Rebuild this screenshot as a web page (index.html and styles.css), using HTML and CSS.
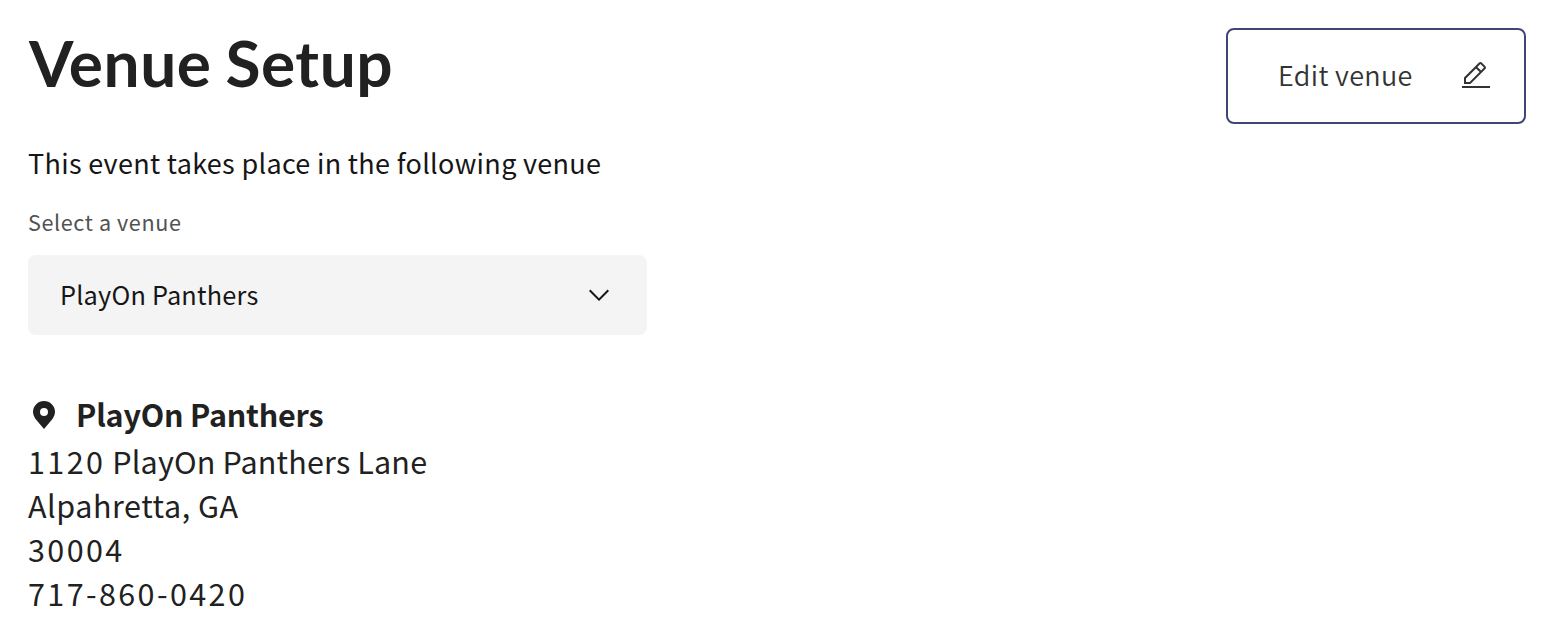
FILE: index.html
```html
<!DOCTYPE html>
<html lang="en">
<head>
<meta charset="utf-8">
<title>Venue Setup</title>
<link rel="stylesheet" href="styles.css">
</head>
<body>
<main class="page">
  <header class="header">
    <h1 class="title">Venue Setup</h1>
    <button class="edit" type="button">
      <span class="edit-label">Edit venue</span>
      <svg class="icon" viewBox="0 0 32 32"><path d="M2 26H30V28H2z"/><path d="M25.4,9c0.8-0.8,0.8-2,0-2.8l-3.6-3.6c-0.8-0.8-2-0.8-2.8,0l-15,15V24h6.4L25.4,9z M20.4,4L24,7.6l-3,3L17.4,7L20.4,4z M6,22v-3.6l10-10l3.6,3.6l-10,10H6z"/></svg>
    </button>
  </header>
  <p class="intro">This event takes place in the following venue</p>
  <div class="label">Select a venue</div>
  <div class="select" role="combobox">
    <span class="value">PlayOn Panthers</span>
    <svg class="icon" viewBox="0 0 16 16"><path d="M8 11 3 6 3.7 5.3 8 9.6 12.3 5.3 13 6z"/></svg>
  </div>
  <section class="venue">
    <div class="venue-head">
      <svg class="icon" viewBox="0 0 32 32"><path d="M16,2A11.0134,11.0134,0,0,0,5,13a10.8885,10.8885,0,0,0,2.2163,6.6s.3.3945.3482.4517L16,30l8.439-9.9526c.0444-.0533.3447-.4478.3447-.4478l.0015-.0033A10.8846,10.8846,0,0,0,27,13,11.0134,11.0134,0,0,0,16,2Zm0,15a4,4,0,1,1,4-4A4.0045,4.0045,0,0,1,16,17Z"/></svg>
      <h2 class="venue-name">PlayOn Panthers</h2>
    </div>
    <div class="line street"><span class="digits">1120</span> PlayOn Panthers Lane</div>
    <div class="line city">Alpahretta, GA</div>
    <div class="line digits">30004</div>
    <div class="line digits">717-860-0420</div>
  </section>
</main>
</body>
</html>
```
FILE: styles.css
```css
* { box-sizing: border-box; }
body {
  margin: 0;
  background: #fff;
  color: #212121;
  font-family: "Noto Sans CJK SC", "Noto Sans", sans-serif;
}
.page { padding: 27px 28px 0; }
.header { display: flex; justify-content: space-between; align-items: flex-start; height: 116px; }
.title {
  margin: 0;
  padding-left: 1px;
  font: 700 64px/72px Lato, sans-serif;
  letter-spacing: 0.5px;
  word-spacing: -2px;
  white-space: nowrap;
}
.icon { display: block; width: 32px; height: 32px; flex: none; fill: currentColor; }
.edit {
  display: flex;
  justify-content: space-between;
  align-items: flex-start;
  width: 300px;
  height: 96px;
  margin-top: 1px;
  padding: 30px 32px 0 50px;
  border: 2px solid #3f4673;
  border-radius: 8px;
  background: #fff;
  color: #333;
  font: 350 27px/30px "Noto Sans CJK SC", sans-serif;
}
.edit-label { letter-spacing: 0.35px; }
.intro { margin: 0; color: #161616; font-size: 27px; line-height: 40px; letter-spacing: 0.31px; white-space: nowrap; }
.label { margin-top: 23px; color: #525252; font-size: 21.6px; line-height: 32px; letter-spacing: 0.6px; }
.select {
  display: flex;
  justify-content: space-between;
  align-items: center;
  width: 619px;
  height: 80px;
  margin-top: 17px;
  padding: 0 32px;
  border-radius: 8px;
  background: #f4f4f4;
  color: #161616;
}
.value { font-size: 25.3px; line-height: 38px; padding-bottom: 2px; letter-spacing: 0.2px; }
.venue { padding-top: 56px; }
.venue-head { display: flex; align-items: center; gap: 16px; height: 48px; }
.venue-name { margin: 0; padding-bottom: 1px; font-size: 30.5px; line-height: 43px; font-weight: 700; letter-spacing: -0.2px; }
.line { height: 44px; font-size: 30.5px; line-height: 44px; white-space: nowrap; }
.street { letter-spacing: 0.16px; }
.city { letter-spacing: 0.55px; }
.digits { letter-spacing: 2.4px; }
```
